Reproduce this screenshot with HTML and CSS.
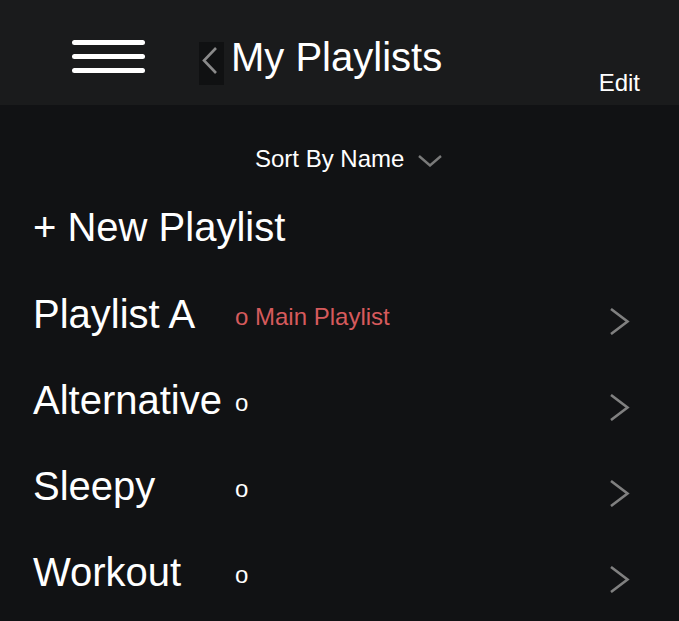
FILE: index.html
```html
<!DOCTYPE html>
<html>
<head>
<meta charset="utf-8">
<link rel="stylesheet" href="styles.css">
</head>
<body>
<div class="app">
  <header class="topbar">
    <div class="hamburger"><span></span><span></span><span></span></div>
    <div class="back">
      <svg width="25" height="43" viewBox="0 0 25 43"><polyline points="17,6 5,18.5 17,31" fill="none" stroke="#8a8a8a" stroke-width="2.6"/></svg>
    </div>
    <h1 class="title">My Playlists</h1>
    <div class="edit">Edit</div>
  </header>
  <main class="content">
    <div class="sort">
      <span class="sort-label">Sort By Name</span>
      <svg class="sort-caret" width="24" height="12" viewBox="0 0 24 12"><polyline points="1,1 12,10.5 23,1" fill="none" stroke="#7a7a7a" stroke-width="2.4"/></svg>
    </div>
    <div class="new-playlist">+ New Playlist</div>
    <ul class="list">
      <li class="row">
        <span class="name">Playlist A</span>
        <span class="tag main">o Main Playlist</span>
        <svg class="chev" width="20" height="27" viewBox="0 0 20 27"><polyline points="1,1 17.5,13.5 1,26" fill="none" stroke="#808080" stroke-width="2.6"/></svg>
      </li>
      <li class="row">
        <span class="name">Alternative</span>
        <span class="tag">o</span>
        <svg class="chev" width="20" height="27" viewBox="0 0 20 27"><polyline points="1,1 17.5,13.5 1,26" fill="none" stroke="#808080" stroke-width="2.6"/></svg>
      </li>
      <li class="row">
        <span class="name">Sleepy</span>
        <span class="tag">o</span>
        <svg class="chev" width="20" height="27" viewBox="0 0 20 27"><polyline points="1,1 17.5,13.5 1,26" fill="none" stroke="#808080" stroke-width="2.6"/></svg>
      </li>
      <li class="row">
        <span class="name">Workout</span>
        <span class="tag">o</span>
        <svg class="chev" width="20" height="27" viewBox="0 0 20 27"><polyline points="1,1 17.5,13.5 1,26" fill="none" stroke="#808080" stroke-width="2.6"/></svg>
      </li>
    </ul>
  </main>
</div>
</body>
</html>
```

FILE: styles.css
```css
html, body {
  margin: 0;
  padding: 0;
  background: #111214;
  font-family: "Liberation Sans", Arial, sans-serif;
  color: #ffffff;
}

.app {
  width: 679px;
  height: 621px;
  overflow: hidden;
  background: #111214;
}

.topbar {
  display: flex;
  align-items: flex-start;
  height: 105px;
  box-sizing: border-box;
  padding-left: 72px;
  background: #1a1b1c;
}

.hamburger {
  width: 73px;
  margin-top: 40px;
  display: flex;
  flex-direction: column;
  gap: 9px;
}

.hamburger span {
  display: block;
  height: 5px;
  border-radius: 3px;
  background: #ffffff;
}

.back {
  margin-left: 54px;
  margin-top: 42px;
  width: 25px;
  height: 43px;
  background: #101112;
}

.back svg {
  display: block;
}

.title {
  margin: 35px 0 0 7px;
  font-size: 40px;
  font-weight: normal;
  line-height: 44px;
}

.edit {
  margin-left: auto;
  margin-right: 39px;
  margin-top: 70px;
  font-size: 24px;
  line-height: 26px;
}

.content {
  display: flex;
  flex-direction: column;
}

.sort {
  display: flex;
  align-items: center;
  gap: 14px;
  height: 28px;
  margin-top: 40px;
  margin-bottom: 11px;
  padding-left: 255px;
}

.sort-label {
  font-size: 24px;
  line-height: 28px;
}

.sort-caret {
  display: block;
  margin-top: 4px;
}

.new-playlist {
  height: 87px;
  padding-left: 33px;
  font-size: 40px;
  line-height: 86px;
}

.list {
  list-style: none;
  margin: 0;
  padding: 0;
}

.row {
  display: grid;
  grid-template-columns: 202px 1fr auto;
  align-items: start;
  height: 86px;
  padding-left: 33px;
  padding-right: 49px;
}

.name {
  font-size: 40px;
  line-height: 86px;
  white-space: nowrap;
}

.tag {
  font-size: 24px;
  line-height: 86px;
  padding-top: 3px;
  color: #ffffff;
}

.tag.main {
  color: #d65a5c;
}

.chev {
  display: block;
  margin-top: 37px;
}
```
